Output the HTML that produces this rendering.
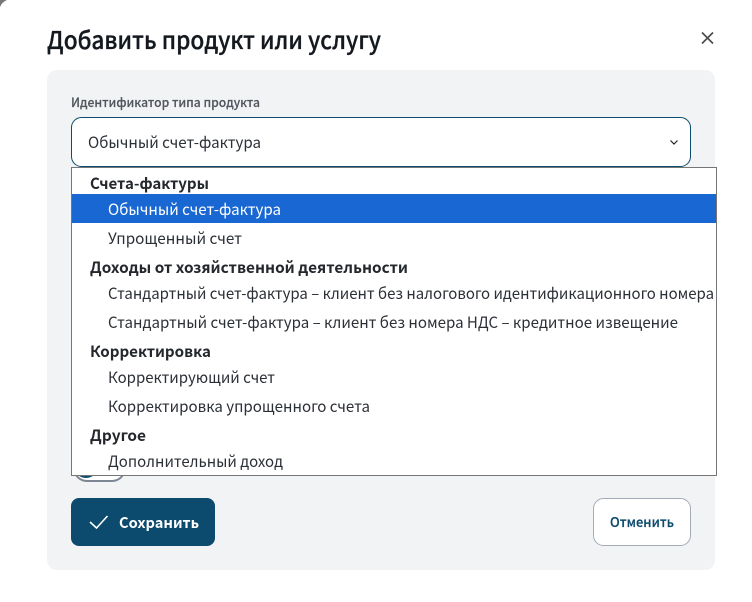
<!DOCTYPE html>
<html><head><meta charset="utf-8"><style>
html,body{margin:0;padding:0;width:752px;height:602px;overflow:hidden;background:#fff}
svg{display:block}
text{font-family:"Noto Sans CJK SC","Liberation Sans",sans-serif}
.i{font-size:15.5px;fill:#2b2f36}
.g{font-size:15.5px;font-weight:700;fill:#24272c}
</style></head><body>
<svg width="752" height="602" viewBox="0 0 752 602" xmlns="http://www.w3.org/2000/svg">
<rect width="752" height="602" fill="#fff"/>
<path d="M0 0H7Q2 2 0 7Z" fill="#777"/>
<text x="47" y="49" font-size="24.500" font-weight="500" fill="#14181f" stroke="#14181f" stroke-width=".3" textLength="334" lengthAdjust="spacingAndGlyphs">Добавить продукт или услугу</text>
<path d="M702 32.500L713 43.500M713 32.500L702 43.500" stroke="#4a4a4a" stroke-width="1.600" fill="none"/>
<rect x="47" y="70" width="668" height="500" rx="10" fill="#f2f3f5"/>
<text x="71" y="107" font-size="12.500" font-weight="500" fill="#50555e" stroke="#50555e" stroke-width=".15" textLength="189" lengthAdjust="spacingAndGlyphs">Идентификатор типа продукта</text>
<rect x="71.500" y="117.500" width="619" height="49" rx="10" fill="#fff" stroke="#0c4a6e"/>
<text x="88" y="148" class="i" textLength="173" lengthAdjust="spacingAndGlyphs">Обычный счет-фактура</text>
<path d="M670.500 140.500L674 144L677.500 140.500" stroke="#222" stroke-width="1.200" fill="none"/>
<rect x="74" y="455" width="51" height="26" rx="13" fill="#fff" stroke="#7d8694" stroke-width="2"/>
<circle cx="86" cy="466" r="12" fill="#0c4a6e"/>
<rect x="71.500" y="167.500" width="645" height="308" fill="#fff" stroke="#767676"/>
<rect x="72" y="194" width="644" height="29" fill="#1967d2"/>
<text x="90" y="189" class="g" textLength="119" lengthAdjust="spacingAndGlyphs">Счета-фактуры</text>
<text x="108" y="215" class="i" style="fill:#fff" textLength="173" lengthAdjust="spacingAndGlyphs">Обычный счет-фактура</text>
<text x="108" y="244" class="i" textLength="134" lengthAdjust="spacingAndGlyphs">Упрощенный счет</text>
<text x="90" y="273" class="g" textLength="318" lengthAdjust="spacingAndGlyphs">Доходы от хозяйственной деятельности</text>
<text x="108" y="299" class="i" textLength="606" lengthAdjust="spacingAndGlyphs">Стандартный счет-фактура – клиент без налогового идентификационного номера</text>
<text x="108" y="328" class="i" textLength="570" lengthAdjust="spacingAndGlyphs">Стандартный счет-фактура – клиент без номера НДС – кредитное извещение</text>
<text x="90" y="357" class="g" textLength="121" lengthAdjust="spacingAndGlyphs">Корректировка</text>
<text x="108" y="383" class="i" textLength="167" lengthAdjust="spacingAndGlyphs">Корректирующий счет</text>
<text x="108" y="412" class="i" textLength="262" lengthAdjust="spacingAndGlyphs">Корректировка упрощенного счета</text>
<text x="90" y="441" class="g" textLength="56" lengthAdjust="spacingAndGlyphs">Другое</text>
<text x="108" y="467" class="i" textLength="175" lengthAdjust="spacingAndGlyphs">Дополнительный доход</text>
<rect x="71" y="498" width="144" height="48" rx="8" fill="#0c4a6e"/>
<path d="M90 522L96.500 528L107.500 516" stroke="#fff" stroke-width="1.600" fill="none"/>
<text x="119" y="528" font-size="14.500" font-weight="700" fill="#fff" textLength="80" lengthAdjust="spacingAndGlyphs">Сохранить</text>
<rect x="593.500" y="498.500" width="97" height="47" rx="10" fill="#fff" stroke="#a3abb9"/>
<text x="610" y="527" font-size="13.500" font-weight="500" fill="#0c4a6e" stroke="#0c4a6e" stroke-width=".2" textLength="64" lengthAdjust="spacingAndGlyphs">Отменить</text>
</svg>
</body></html>
